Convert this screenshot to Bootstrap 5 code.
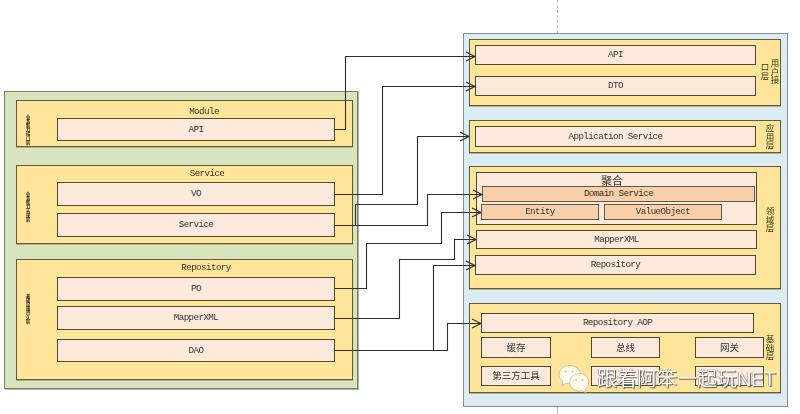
<!DOCTYPE html>
<html lang="zh"><head><meta charset="utf-8"><title>架构图</title>
<link rel="stylesheet" href="https://cdn.jsdelivr.net/npm/bootstrap@5.3.0/dist/css/bootstrap.min.css">
<style>
html,body{margin:0;background:#fff;overflow:hidden}
.canvas{position:relative;width:800px;height:414px;overflow:hidden;font-family:"Liberation Mono","Noto Sans CJK SC",monospace;font-size:9.2px;letter-spacing:-.57px;color:#35352e;line-height:1}
.art{position:absolute;inset:0;filter:blur(.4px)}
.nd{position:absolute;box-sizing:border-box;display:flex;align-items:center;justify-content:center;white-space:pre}
.pg{background:#d7e4bd;border:1px solid #76826c;box-shadow:1px 1px 0 #a9b3a2}
.pb{background:#dbecf4;border:1.5px solid #858f93}
.ly{background:#ffe599;border:1px solid #5f5b3c;box-shadow:0 1px 0 #b9b088}
.bx{background:#fdeadd;border:1px solid #4e4a30}
.og{background:#f9cfa9;border:1px solid #5f5a46}
.tt{position:absolute;white-space:pre;transform:translate(-50%,-50%)}
.vt{position:absolute;writing-mode:vertical-rl;text-orientation:upright;text-align:center;font-family:"Noto Sans CJK SC",sans-serif;white-space:normal;letter-spacing:0}
.sm{font-size:4.2px;width:6px;height:30px;line-height:6px;color:#2c2814;font-weight:700}
.md{font-size:8.500px;line-height:10px;color:#3a3418;font-weight:400}
.cjk{font-family:"Noto Sans CJK SC",sans-serif;font-size:9.500px;letter-spacing:0;color:#333}
.wire{position:absolute;left:0;top:0}
.wm{position:absolute;left:597px;top:366px;font:20px/24px "Noto Sans CJK SC",sans-serif;font-weight:400;letter-spacing:0;color:#fffef8;white-space:pre;text-shadow:1px 1px 1px #555,-.5px -.5px .6px #777}
.wm span{font-family:"Liberation Sans",sans-serif;letter-spacing:-.6px}
.dash{position:absolute;left:557px;width:1px;border-left:1px dashed #bdbdbd}
#d1{top:0;height:33px}#d2{top:407px;height:7px;border-left-style:solid}
#pg{left:4px;top:91px;width:354px;height:298px}
#l1{left:16px;top:100px;width:337px;height:47px}
#l2{left:16px;top:165px;width:337px;height:79px}
#l3{left:16px;top:259px;width:337px;height:121px}
#b1{left:57px;top:118px;width:278px;height:23px}
#b2{left:57px;top:182px;width:278px;height:24px}
#b3{left:57px;top:213px;width:278px;height:24px}
#b4{left:57px;top:277px;width:278px;height:24px}
#b5{left:57px;top:306px;width:278px;height:24px}
#b6{left:57px;top:339px;width:278px;height:23px}
#t1{left:204px;top:112px}#t2{left:207px;top:174px}#t3{left:206px;top:268px}
#s1{left:25px;top:115px}#s2{left:25px;top:192px}#s3{left:25px;top:294px}
#pb{left:463px;top:33px;width:325px;height:374px}
#r1{left:469px;top:39px;width:312px;height:67px}
#r2{left:469px;top:120px;width:312px;height:33px}
#r3{left:469px;top:166px;width:312px;height:123px}
#r4{left:469px;top:303px;width:312px;height:90px}
#c1{left:475px;top:45px;width:281px;height:20px}
#c2{left:475px;top:76px;width:281px;height:20px}
#c3{left:475px;top:126px;width:281px;height:21px}
#c4{left:476px;top:172px;width:281px;height:53px}
#c5{left:482px;top:186px;width:273px;height:16px}
#c6{left:481px;top:204px;width:118px;height:16px}
#c7{left:604px;top:204px;width:118px;height:16px}
#c8{left:476px;top:230px;width:281px;height:19px}
#c9{left:475px;top:255px;width:281px;height:20px}
#e1{left:481px;top:313px;width:273px;height:20px}
#e2{left:481px;top:337px;width:70px;height:21px}
#e3{left:591px;top:337px;width:69px;height:21px}
#e4{left:695px;top:337px;width:69px;height:21px}
#e5{left:481px;top:366px;width:70px;height:20px}
#e6{left:591px;top:366px;width:69px;height:20px}
#e7{left:695px;top:366px;width:69px;height:20px}
#t4{left:612px;top:180px;font:11px "Noto Sans CJK SC",sans-serif;letter-spacing:0}
#v1{left:760px;top:58px;width:20px;height:27px}
#v2{left:765px;top:124px;width:10px;height:26px}
#v3{left:765px;top:206px;width:10px;height:27px}
#v4{left:765px;top:335px;width:10px;height:26px}
#wc{position:absolute;left:558px;top:364px}
</style></head>
<body>
<main class="canvas">
<div class="art">
<div class="dash" id="d1"></div><div class="dash" id="d2"></div>

<div class="nd pg" id="pg"></div>
<div class="nd ly" id="l1"></div><div class="nd ly" id="l2"></div><div class="nd ly" id="l3"></div>
<div class="tt" id="t1">Module</div><div class="tt" id="t2">Service</div><div class="tt" id="t3">Repository</div>
<div class="vt sm" id="s1">业务能力接口层</div><div class="vt sm" id="s2">业务能力实现层</div><div class="vt sm" id="s3">基础设施持久层</div>
<div class="nd bx" id="b1">API</div><div class="nd bx" id="b2">VO</div><div class="nd bx" id="b3">Service</div>
<div class="nd bx" id="b4">PO</div><div class="nd bx" id="b5">MapperXML</div><div class="nd bx" id="b6">DAO</div>

<div class="nd pb" id="pb"></div>
<div class="nd ly" id="r1"></div><div class="nd ly" id="r2"></div><div class="nd ly" id="r3"></div><div class="nd ly" id="r4"></div>
<div class="nd bx" id="c1">API</div><div class="nd bx" id="c2">DTO</div><div class="nd bx" id="c3">Application Service</div>
<div class="nd bx" id="c4"></div><div class="tt" id="t4">聚合</div>
<div class="nd og" id="c5">Domain Service</div><div class="nd og" id="c6">Entity</div><div class="nd og" id="c7">ValueObject</div>
<div class="nd bx" id="c8">MapperXML</div><div class="nd bx" id="c9">Repository</div>
<div class="nd bx" id="e1">Repository AOP</div>
<div class="nd bx cjk" id="e2">缓存</div><div class="nd bx cjk" id="e3">总线</div><div class="nd bx cjk" id="e4">网关</div>
<div class="nd bx cjk" id="e5">第三方工具</div><div class="nd bx cjk" id="e6"></div><div class="nd bx cjk" id="e7"></div>
<div class="vt md" id="v1">用户接口层</div><div class="vt md" id="v2">应用层</div><div class="vt md" id="v3">领域层</div><div class="vt md" id="v4">基础层</div>

<svg class="wire" width="800" height="414" fill="none" stroke="#2f2f2f" stroke-width="1.1">
<path d="M335 129.500H345.500V56.500H475M335 194.500H382.500V86.500H475M335 225.500H427.500V194.500H482M355.500 225.500V204.500H417.500V136.500H469M335 288.500H366.500V243.500H441.500V212.500H481M335 318.500H399.500V259.500H454.500V239.500H476M335 350.500H447.500V323.500H481M433.500 350.500V265.500H475"/>
<path d="M466 52l9 4.500-9 4.500M466 82l9 4.500-9 4.500M460 132l9 4.500-9 4.500M473 190l9 4.500-9 4.500M472 208l9 4.500-9 4.500M467 235l9 4.500-9 4.500M466 261l9 4.500-9 4.500M472 319l9 4.500-9 4.500"/>
</svg>
</div>

<svg id="wc" width="34" height="32" viewBox="0 0 34 32">
<path d="M11.500 1.500C5.700 1.500 1 5.500 1 10.500c0 2.800 1.600 5.200 4 6.800L4 21.500l4.600-2.500c1 .3 2 .4 3 .4 5.700 0 11-3.900 11-8.900S17.300 1.500 11.500 1.500z" fill="#fffcee" stroke="#9a9684" stroke-width=".5"/>
<path d="M21.500 9.500c-5.500 0-9.800 3.900-9.800 8.800s4.300 8.800 9.800 8.800c1 0 1.900-.1 2.700-.4l3.800 2.300-.9-3.600c2.200-1.600 3.600-4.100 3.600-7.100 0-4.900-3.700-8.800-9.200-8.800z" fill="#fffcee" stroke="#9a9684" stroke-width=".5"/>
<circle cx="7.500" cy="7.500" r="1" fill="#cfc49a"/><circle cx="14.500" cy="7.500" r="1" fill="#cfc49a"/>
<circle cx="18" cy="16" r="1" fill="#cfc49a"/><circle cx="24.500" cy="16" r="1" fill="#cfc49a"/>
</svg>
<div class="wm">跟着阿笨一起玩<span>NET</span></div>
</main>
<script src="https://cdn.jsdelivr.net/npm/bootstrap@5.3.0/dist/js/bootstrap.bundle.min.js"></script>
</body></html>
